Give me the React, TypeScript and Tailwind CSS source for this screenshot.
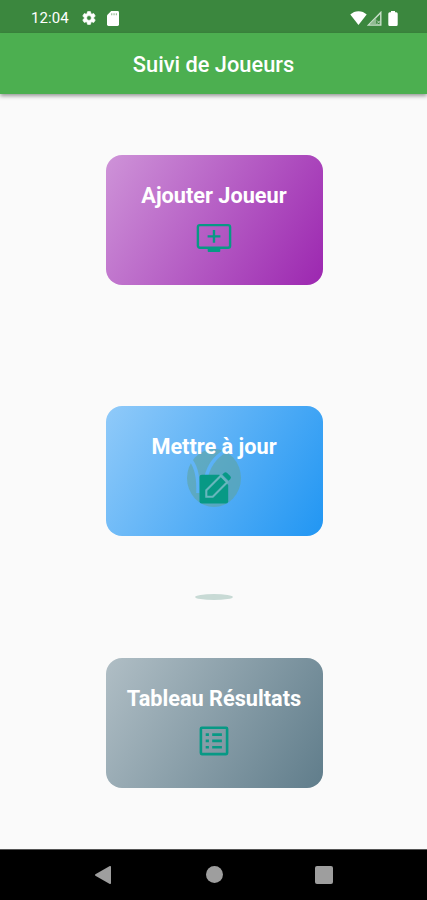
import type { ReactNode } from "react";

type CardProps = {
  title: string;
  gradient: string;
  children: ReactNode;
};

function StatusBar() {
  return (
    <div className="flex h-[33px] shrink-0 items-center bg-[#3b873e] pt-[3px] pr-[29px] pl-[31px] text-white">
      <span className="w-[50px] text-[15px] leading-none tracking-[0.1px]">12:04</span>
      <svg viewBox="0 0 24 24" className="size-[16px] fill-current stroke-current">
        <path d="M19.14 12.94c.04-.3.06-.61.06-.94 0-.32-.02-.64-.07-.94l2.03-1.58c.18-.14.23-.41.12-.61l-1.92-3.32c-.12-.22-.37-.29-.59-.22l-2.39.96c-.5-.38-1.03-.7-1.62-.94l-.36-2.54c-.04-.24-.24-.41-.48-.41h-3.84c-.24 0-.43.17-.47.41l-.36 2.54c-.59.24-1.13.57-1.62.94l-2.39-.96c-.22-.08-.47 0-.59.22L2.74 8.87c-.12.21-.08.47.12.61l2.03 1.58c-.05.3-.09.63-.09.94s.02.64.07.94l-2.03 1.58c-.18.14-.23.41-.12.61l1.92 3.32c.12.22.37.29.59.22l2.39-.96c.5.38 1.03.7 1.62.94l.36 2.54c.05.24.24.41.48.41h3.84c.24 0 .44-.17.47-.41l.36-2.54c.59-.24 1.13-.56 1.62-.94l2.39.96c.22.08.47 0 .59-.22l1.92-3.32c.12-.22.07-.47-.12-.61l-2.01-1.58zM12 15.6A3.6 3.6 0 1 1 12 8.4a3.6 3.6 0 0 1 0 7.2z" />
      </svg>
      <svg viewBox="0 0 12 15" className="ml-[10px] h-[15px] w-[12px] fill-current">
        <path d="M4.2 0H10.6Q12 0 12 1.4V13.6Q12 15 10.6 15H1.4Q0 15 0 13.6V4.2Z" />
        <path d="M4.2 2.3h1.1v2H4.2zM6.5 2.3h1.1v2H6.5zM8.8 2.3h1.1v2H8.8z" fill="#8fba91" />
      </svg>
      <div className="ml-auto flex items-center">
        <svg viewBox="0 0 17 14" className="h-[14px] w-[17px] fill-current">
          <path d="M8.5 14 0.3 3.6C2.6 1.3 5.3.2 8.5.2s5.9 1.1 8.2 3.4z" />
        </svg>
        <svg viewBox="0 0 15 15" className="mr-[6px] h-[15px] w-[15px]">
          <path d="M1.5 14 13.8 1.4V14Z" fill="none" stroke="#c9dfca" strokeWidth="1.4" />
          <path d="M2.5 13.5 9.2 7V13.5Z" fill="#8fba91" />
          <path d="m10 9.5 3.2 3.2m0-3.2L10 12.7" stroke="#b9d5ba" strokeWidth="1" />
        </svg>
        <svg viewBox="0 0 10 15" className="h-[15px] w-[10px] fill-current">
          <path d="M3 0h4v1.3h1.3Q9.7 1.3 9.7 2.8v10.7q0 1.5-1.4 1.5H1.7Q.3 15 .3 13.5V2.8q0-1.5 1.4-1.5H3z" />
        </svg>
      </div>
    </div>
  );
}

function MenuCard({ title, gradient, children }: CardProps) {
  return (
    <button
      className={`relative flex h-[130px] w-[217px] shrink-0 flex-col items-center rounded-[16px] pt-[27px] ${gradient}`}
    >
      <span className="relative z-10 text-[21.7px] leading-[27px] font-bold whitespace-nowrap text-white">
        {title}
      </span>
      {children}
    </button>
  );
}

// tennis ball bouncing behind the middle card's label
function Ball() {
  return (
    <svg viewBox="0 0 54 58" className="absolute top-[43px] left-[81px] h-[58px] w-[54px]">
      <mask id="seams">
        <rect width="54" height="58" fill="#fff" />
        <path d="M2 9Q12 19 11 44M40 1Q21 11 18 34" fill="none" stroke="#000" strokeWidth="3.6" />
      </mask>
      <ellipse cx="27" cy="29" rx="27" ry="29" fill="#5fa399" fillOpacity="0.56" mask="url(#seams)" />
    </svg>
  );
}

function EditIcon() {
  return (
    <svg viewBox="0 0 38 38" className="relative mt-[10px] size-[38px] fill-[#079985]">
      <path d="M6.8 4.8H24.3L33.2 15V31.2Q33.2 33.5 30.9 33.5H6.8Q4.5 33.5 4.5 31.2V7.1Q4.5 4.8 6.8 4.8Z" />
      <path d="M11.3 20.3 25.8 5.8 32.2 12.2 17.8 26.7H11.3Z" stroke="#68b6bd" strokeWidth="2.1" />
      <path d="M27.3 4.6 28.9 3Q30.5 1.5 32.1 3L35.2 6.1Q36.7 7.6 35.2 9.2L33.5 10.8Z" />
    </svg>
  );
}

function NavigationBar() {
  return (
    <nav className="flex h-[51px] shrink-0 items-center justify-between border-t border-[#555] bg-black px-[94px] pb-px text-[#9e9e9e]">
      <svg viewBox="0 0 18 20" className="h-[20px] w-[18px] fill-current">
        <path d="M1.4 9.2 15.8 1.1Q17 .6 17 1.9V18.1Q17 19.4 15.8 18.9L1.4 10.8Q.5 10 1.4 9.2Z" />
      </svg>
      <span className="ml-px size-[17px] rounded-full bg-[#9e9e9e]" />
      <span className="size-[18px] rounded-[2px] bg-[#9e9e9e]" />
    </nav>
  );
}

export default function App() {
  return (
    <div className="flex h-[900px] w-full flex-col overflow-hidden bg-[#fafafa] font-['Roboto',sans-serif]">
      <StatusBar />
      <header className="z-10 flex h-[61px] shrink-0 items-center justify-center bg-[#4caf50] pt-[3px] shadow-[0_2px_4px_rgba(0,0,0,0.4)]">
        <h1 className="text-[21.8px] font-medium text-white">Suivi de Joueurs</h1>
      </header>

      <main className="flex flex-1 flex-col items-center pt-[61px] pl-px">
        <MenuCard title="Ajouter Joueur" gradient="bg-linear-[121deg,#ce93d8,#9c27b0]">
          <svg viewBox="0 0 38 38" className="mt-[10px] size-[38px] fill-[#079985]">
            <rect x="2.9" y="6.1" width="32.2" height="22.6" rx="2" fill="none" stroke="#079985" strokeWidth="2.4" />
            <path d="M12.7 29h12.6v3.1q0 .9-.9.9H13.6q-.9 0-.9-.9z" />
            <path d="M17.8 11h2.4v5.2h5.2v2.4h-5.2v5.2h-2.4v-5.2h-5.2v-2.4h5.2z" />
          </svg>
        </MenuCard>

        <div className="mt-[121px]">
          <MenuCard title="Mettre à jour" gradient="bg-linear-[121deg,#90caf9,#2196f3]">
            <Ball />
            <EditIcon />
          </MenuCard>
        </div>

        {/* shadow of the ball on the ground */}
        <div className="mt-[58px] h-[6px] w-[38px] rounded-[50%] bg-[#c8dad5]" />

        <div className="mt-[58px]">
          <MenuCard title="Tableau Résultats" gradient="bg-linear-[121deg,#b0bec5,#607d8b]">
            <svg viewBox="0 0 38 38" className="mt-[10px] size-[38px] fill-[#079985]">
              <rect x="5.9" y="5.7" width="26.2" height="26.4" rx="1" fill="none" stroke="#079985" strokeWidth="2.6" />
              <path d="M10.7 11.3h3.2v2.6h-3.2zM17.2 11.3h9.7v2.6h-9.7zM10.7 17.6h3.2v2.6h-3.2zM17.2 17.6h9.7v2.6h-9.7zM10.7 23.9h3.2v2.6h-3.2zM17.2 23.9h9.7v2.6h-9.7z" />
            </svg>
          </MenuCard>
        </div>
      </main>

      <NavigationBar />
    </div>
  );
}
